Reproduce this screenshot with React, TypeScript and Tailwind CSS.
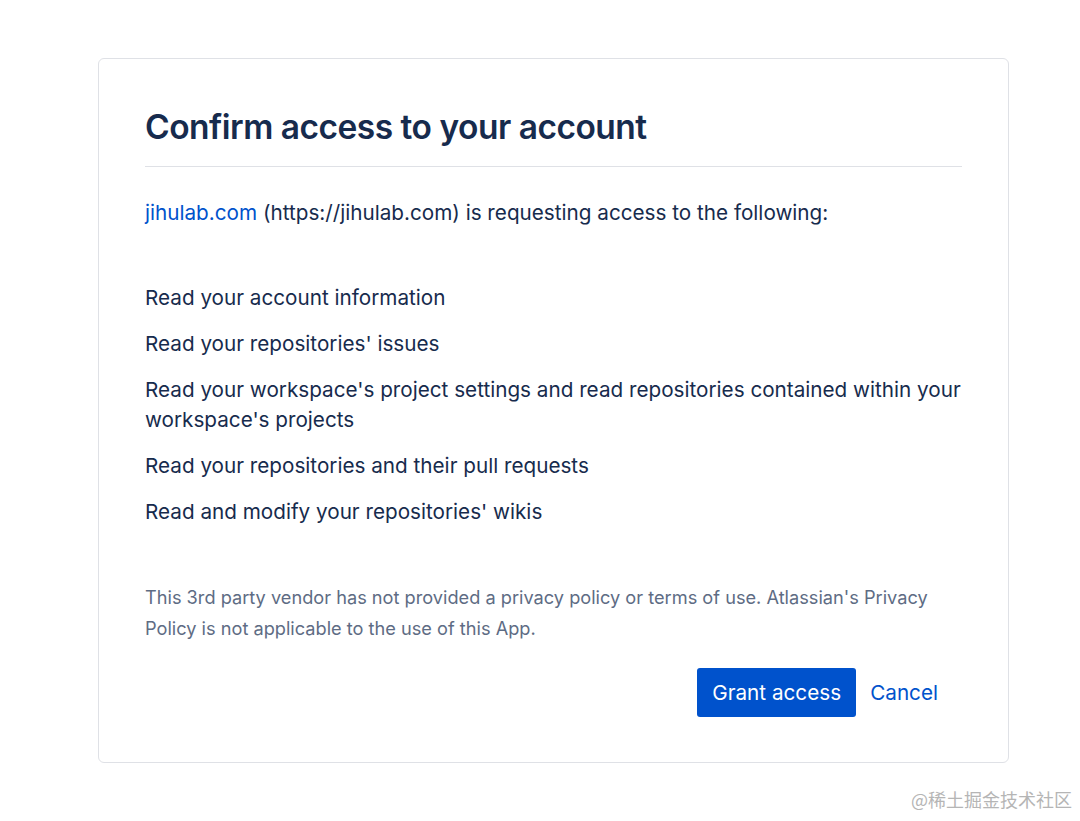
const scopes = [
  "Read your account information",
  "Read your repositories' issues",
  "Read your workspace's project settings and read repositories contained within your workspace's projects",
  "Read your repositories and their pull requests",
  "Read and modify your repositories' wikis",
];

export default function App() {
  return (
    <div className="relative min-h-[821px] w-[1080px] bg-white font-['Inter',sans-serif] text-[#172b4d]">
      <div className="pl-[98px] pt-[58px]">
        <div className="w-[911px] rounded-[6px] border border-[#dfe1e6] px-[46px] pb-[45px] pt-[47px]">
          <h1 className="border-b border-[#dfe1e6] pb-[17px] text-[33.5px] leading-[43px] font-semibold tracking-[-0.5px]">
            Confirm access to your account
          </h1>

          <p className="mt-[31px] text-[20.7px] leading-[30px]">
            <a href="#" className="text-[#0052cc]">jihulab.com</a> (https://jihulab.com) is requesting access to the following:
          </p>

          <ul className="mt-[55px] flex flex-col gap-[16px] text-[20.7px] leading-[30px]">
            {scopes.map((s) => (
              <li key={s}>{s}</li>
            ))}
          </ul>

          <p className="mt-[55px] text-[18.2px] leading-[31px] text-[#5e6c84]">
            This 3rd party vendor has not provided a privacy policy or terms of use. Atlassian's Privacy Policy is not applicable to the use of this App.
          </p>

          <div className="mt-[24px] flex items-center justify-end gap-[14px] pr-[24px]">
            <button className="h-[49px] w-[159px] rounded-[3px] bg-[#0052cc] text-[20.7px] text-white">
              Grant access
            </button>
            <button className="text-[20.7px] text-[#0052cc]">Cancel</button>
          </div>
        </div>
      </div>

      <div className="absolute bottom-[8px] right-[8px] font-['Noto_Sans_CJK_SC',sans-serif] text-[18px] text-[#b5b5b5]">
        @稀土掘金技术社区
      </div>
    </div>
  );
}
